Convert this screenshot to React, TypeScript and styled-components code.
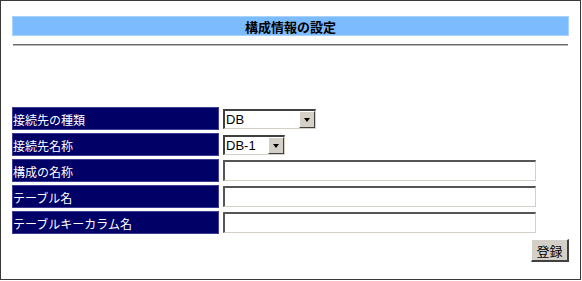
import React from "react";
import styled, { createGlobalStyle } from "styled-components";

const Global = createGlobalStyle`
  html, body { margin: 0; padding: 0; background: #ffffff; }
  body { font-family: "Noto Sans CJK JP", "Liberation Sans", sans-serif; }
`;

const Frame = styled.div`
  box-sizing: border-box;
  width: 581px;
  height: 280px;
  border: 1px solid #3a3a3a;
  padding: 15px 11px 0 11px;
  display: flex;
  flex-direction: column;
`;

const TitleBar = styled.div`
  height: 20px;
  box-sizing: border-box;
  background: #7dbbff;
  border: 1px solid #a8d2ff;
  display: flex;
  align-items: center;
  justify-content: center;
  font-size: 13px;
  font-weight: bold;
  color: #000;
`;

const Rule = styled.div`
  margin: 8px 1px 0 1px;
  height: 2px;
  border-top: 1px solid #6a6a6a;
  border-bottom: 1px solid #b8b8b8;
  box-sizing: border-box;
`;

const Form = styled.div`
  margin-top: 61px;
  display: grid;
  grid-template-columns: 207px 1fr;
  row-gap: 3px;
  column-gap: 2px;
`;

const Label = styled.div`
  box-sizing: border-box;
  height: 23px;
  background: #000066;
  border: 1px solid #3c3c96;
  color: #ffffff;
  font-size: 12px;
  display: flex;
  align-items: center;
  padding-top: 1px;
`;

const Cell = styled.div`
  display: flex;
  align-items: center;
  padding-left: 2px;
`;

const Combo = styled.div<{ $w: number }>`
  box-sizing: border-box;
  width: ${(p) => p.$w}px;
  height: 20px;
  border-top: 2px solid #404040;
  border-left: 2px solid #404040;
  border-right: 1px solid #d4d0c8;
  border-bottom: 1px solid #d4d0c8;
  background: #fff;
  display: flex;
  align-items: stretch;
`;

const ComboText = styled.span`
  flex: 1;
  font-family: "Liberation Sans", Arial, sans-serif;
  font-size: 13px;
  line-height: 17px;
  padding-left: 1px;
  color: #000;
`;

const ComboButton = styled.span`
  width: 16px;
  box-sizing: border-box;
  background: #d4d0c8;
  border-top: 1px solid #ffffff;
  border-left: 1px solid #ffffff;
  border-right: 1px solid #404040;
  border-bottom: 1px solid #404040;
  display: flex;
  align-items: center;
  justify-content: center;
  &::after {
    content: "";
    border-left: 3.5px solid transparent;
    border-right: 3.5px solid transparent;
    border-top: 4px solid #000;
    margin-top: 1px;
  }
`;

const TextInput = styled.input`
  box-sizing: border-box;
  width: 313px;
  height: 21px;
  margin: 0;
  padding: 0 2px;
  border-top: 2px solid #555555;
  border-left: 2px solid #555555;
  border-right: 1px solid #d4d0c8;
  border-bottom: 1px solid #d4d0c8;
  background: #fff;
  outline: none;
  font-size: 12px;
`;

const Footer = styled.div`
  display: flex;
  justify-content: flex-end;
  margin-top: 5px;
`;

const Button = styled.button`
  box-sizing: border-box;
  width: 38px;
  height: 23px;
  margin: 0;
  padding: 0;
  background: #d4d0c8;
  border-top: 1px solid #ffffff;
  border-left: 1px solid #ffffff;
  border-right: 2px solid #404040;
  border-bottom: 2px solid #404040;
  font-family: "Noto Sans CJK JP", sans-serif;
  font-size: 13px;
  color: #000;
`;

const rows: { label: string; kind: "select" | "text"; value?: string; w?: number }[] = [
  { label: "接続先の種類", kind: "select", value: "DB", w: 93 },
  { label: "接続先名称", kind: "select", value: "DB-1", w: 62 },
  { label: "構成の名称", kind: "text" },
  { label: "テーブル名", kind: "text" },
  { label: "テーブルキーカラム名", kind: "text" },
];

export default function App() {
  return (
    <>
      <Global />
      <Frame>
        <TitleBar>構成情報の設定</TitleBar>
        <Rule />
        <Form>
          {rows.map((r) => (
            <React.Fragment key={r.label}>
              <Label>{r.label}</Label>
              <Cell>
                {r.kind === "select" ? (
                  <Combo $w={r.w ?? 90}>
                    <ComboText>{r.value}</ComboText>
                    <ComboButton />
                  </Combo>
                ) : (
                  <TextInput type="text" />
                )}
              </Cell>
            </React.Fragment>
          ))}
        </Form>
        <Footer>
          <Button>登録</Button>
        </Footer>
      </Frame>
    </>
  );
}
